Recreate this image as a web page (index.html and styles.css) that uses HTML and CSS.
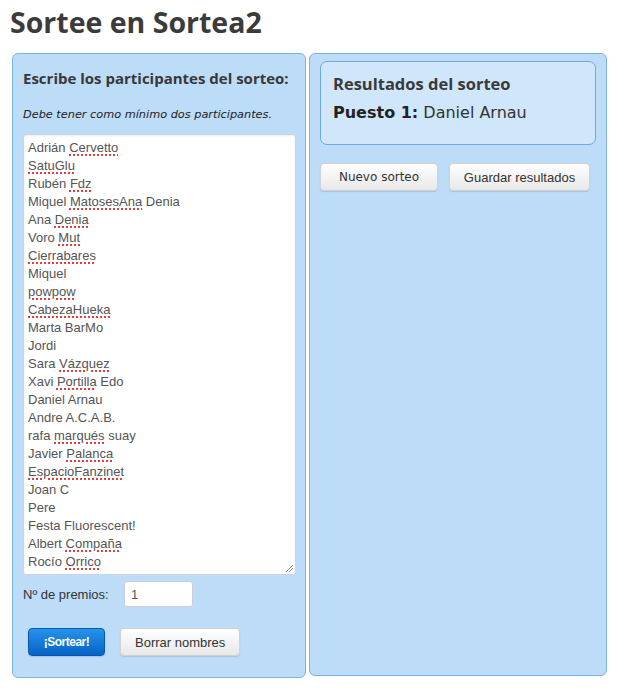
FILE: index.html
```html
<!DOCTYPE html>
<html lang="es">
<head>
    <meta charset="UTF-8">
    <title>Sortee en Sortea2</title>
    <link rel="stylesheet" href="styles.css">
</head>
<body>
    <h1>Sortee en Sortea2</h1>
    <div id="panels">
        <div class="panel" id="entry">
            <h2>Escribe los participantes del sorteo:</h2>
            <p class="hint">Debe tener como mínimo dos participantes.</p>
            <div class="names">
                <div>Adrián <span class="typo">Cervetto</span></div>
                <div><span class="typo">SatuGlu</span></div>
                <div>Rubén <span class="typo">Fdz</span></div>
                <div>Miquel <span class="typo">MatosesAna</span> Denia</div>
                <div>Ana <span class="typo">Denia</span></div>
                <div>Voro <span class="typo">Mut</span></div>
                <div><span class="typo">Cierrabares</span></div>
                <div>Miquel</div>
                <div><span class="typo">powpow</span></div>
                <div><span class="typo">CabezaHueka</span></div>
                <div>Marta BarMo</div>
                <div>Jordi</div>
                <div>Sara <span class="typo">Vázquez</span></div>
                <div>Xavi <span class="typo">Portilla</span> Edo</div>
                <div>Daniel Arnau</div>
                <div>Andre A.C.A.B.</div>
                <div>rafa <span class="typo">marqués</span> suay</div>
                <div>Javier <span class="typo">Palanca</span></div>
                <div><span class="typo">EspacioFanzinet</span></div>
                <div>Joan C</div>
                <div>Pere</div>
                <div>Festa Fluorescent!</div>
                <div>Albert <span class="typo">Compaña</span></div>
                <div>Rocío <span class="typo">Orrico</span></div>
                <span class="grip"></span>
            </div>
            <div class="prizes">
                <label>Nº de premios:</label>
                <input type="text" value="1">
            </div>
            <div class="actions">
                <button class="btn btn-primary">¡Sortear!</button>
                <button class="btn">Borrar nombres</button>
            </div>
        </div>
        <div class="panel" id="results">
            <div class="result-box">
                <h3>Resultados del sorteo</h3>
                <p class="place"><b>Puesto 1:</b> Daniel Arnau</p>
            </div>
            <div class="actions">
                <button class="btn btn-verdana">Nuevo sorteo</button>
                <button class="btn btn-save">Guardar resultados</button>
            </div>
        </div>
    </div>
</body>
</html>
```

FILE: styles.css
```css
body {
    margin: 0;
    padding: 4px 12px 0 12px;
    background-color: white;
    font-family: "Liberation Sans", Arial, sans-serif;
    color: #333;
}

h1 {
    font-family: "Open Sans", sans-serif;
    font-weight: bold;
    font-size: 28.5px;
    color: #3b3b3b;
    margin: 0 0 13px -2px;
    line-height: 36px;
}

#panels {
    display: flex;
    gap: 3px;
}

.panel {
    background-color: #bddcf8;
    border: 1px solid #7fb2e5;
    border-radius: 6px;
    height: 623px;
    flex: none;
}

#entry {
    width: 273px;
    padding: 0 9px 0 10px;
}

#entry h2 {
    font-family: "Open Sans", sans-serif;
    font-size: 15px;
    font-weight: bold;
    color: #383838;
    margin: 13px 0 0 0;
    line-height: 22px;
}

.hint {
    font-family: "DejaVu Sans", Verdana, sans-serif;
    font-style: italic;
    font-size: 11.3px;
    color: #222;
    margin: 18px 0 12px 0;
    line-height: 15px;
}

.names {
    position: relative;
    background-color: white;
    border: 1px solid #c9d6e2;
    border-radius: 3px;
    height: 433px;
    padding: 4px 4px 2px 4px;
    font-size: 13px;
    line-height: 18px;
    color: #555;
    box-shadow: inset 0 1px 2px rgba(0,0,0,0.08);
    overflow: hidden;
}

.typo {
    text-decoration: underline dotted #e0403a;
    text-underline-offset: 2px;
    text-decoration-thickness: 1.5px;
}

.grip {
    position: absolute;
    right: 2px;
    bottom: 2px;
    width: 7px;
    height: 7px;
    background: linear-gradient(135deg, transparent 45%, #888 45%, #888 52%, transparent 52%, transparent 70%, #888 70%, #888 77%, transparent 77%);
}

.prizes {
    display: flex;
    align-items: center;
    margin-top: 6px;
    height: 26px;
    font-size: 13px;
    color: #333;
}

.prizes label {
    width: 101px;
}

.prizes input {
    width: 69px;
    height: 26px;
    box-sizing: border-box;
    border: 1px solid #ccd;
    border-radius: 3px;
    padding: 0 6px;
    font-family: "Liberation Sans", Arial, sans-serif;
    font-size: 13px;
    color: #555;
}

.actions {
    display: flex;
    gap: 15px;
}

#entry .actions {
    margin: 21px 0 0 5px;
}

.btn {
    height: 28px;
    padding: 0 14px;
    font-family: "Liberation Sans", Arial, sans-serif;
    font-size: 13px;
    color: #333;
    background: linear-gradient(#ffffff, #e8e8e8);
    border: 1px solid #d2d2d2;
    border-radius: 4px;
    box-shadow: 0 1px 1px rgba(0,0,0,0.12);
}

.btn-primary {
    width: 77px;
    padding: 0;
    color: white;
    font-size: 12px;
    font-weight: bold;
    letter-spacing: -0.5px;
    background: linear-gradient(#2793ea, #0663c6);
    border-color: #0a58ad;
}

.btn-verdana {
    width: 118px;
    padding: 0;
    font-family: "DejaVu Sans", Verdana, sans-serif;
    font-size: 12px;
}

.btn-save {
    width: 141px;
    padding: 0;
}

#results {
    width: 298px;
    padding: 0 10px;
    box-sizing: border-box;
}

.result-box {
    margin-top: 7px;
    background-color: #d0e6fb;
    border: 1px solid #6ea8e1;
    border-radius: 7px;
    height: 82px;
    padding: 0 12px;
}

.result-box h3 {
    font-family: "Open Sans", sans-serif;
    font-size: 16.5px;
    font-weight: bold;
    color: #3a3a3a;
    margin: 11px 0 0 0;
    line-height: 22px;
}

.place {
    font-family: "DejaVu Sans", Verdana, sans-serif;
    font-size: 16px;
    margin: 8px 0 0 0;
    line-height: 20px;
    color: #333;
}

.place b {
    color: #222;
}

#results .actions {
    margin-top: 18px;
    gap: 11px;
}
```
